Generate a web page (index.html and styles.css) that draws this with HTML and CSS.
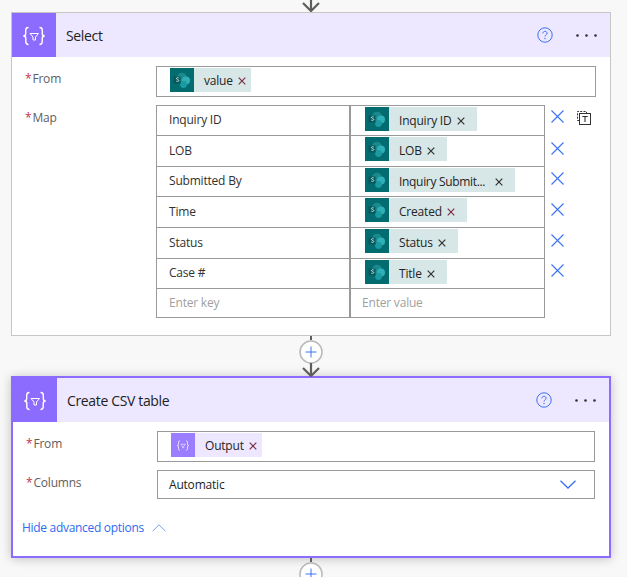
FILE: index.html
```html
<!DOCTYPE html>
<html lang="en">
<head>
<meta charset="utf-8">
<title>Flow</title>
<link rel="stylesheet" href="styles.css">
</head>
<body>
<svg class="defs" width="0" height="0" aria-hidden="true">
  <symbol id="data-op" viewBox="0 0 44 44">
    <path d="M16.500 14.500c-2.500 0-2.800 1-2.800 2.700v3.300c0 1.500-.7 2.500-2.400 2.500 1.700 0 2.500 1 2.500 2.500v3.300c0 1.700.2 2.700 2.700 2.700M27.500 14.500c2.500 0 2.800 1 2.800 2.700v3.300c0 1.500.7 2.500 2.400 2.500-1.700 0-2.500 1-2.500 2.500v3.300c0 1.700-.2 2.700-2.700 2.700" fill="none" stroke="#fff" stroke-width="1.400"/>
    <path d="M18 20.500h8.500l-3 3.500v3h-2.500v-3z" fill="none" stroke="#fff" stroke-width="1"/>
  </symbol>
  <symbol id="sharepoint" viewBox="0 0 24 24">
    <rect width="24" height="24" fill="#036c70"/>
    <circle cx="12" cy="9.500" r="4.800" fill="#1a8a8e"/>
    <circle cx="16" cy="12.500" r="4" fill="#2fb0b6"/>
    <circle cx="13.500" cy="16.500" r="3.400" fill="#1a9ba1"/>
    <rect x="3.500" y="8.500" width="7" height="7" fill="#04585c"/>
    <path d="M8.800 10c-.9-.5-2.500-.4-2.400.6.100 1 2.400.8 2.400 1.900 0 1-1.600 1.100-2.500.6" fill="none" stroke="#e8f4f4" stroke-width=".8"/>
  </symbol>
  <symbol id="close-small" viewBox="0 0 8 8">
    <path d="M.7.700l6.600 6.600M7.300.700L.7 7.300" fill="none" stroke="currentColor" stroke-width="1.200"/>
  </symbol>
  <symbol id="close-big" viewBox="0 0 13 13">
    <path d="M.5.500l12 12M12.500.500l-12 12" fill="none" stroke="#3a72f5" stroke-width="1.100"/>
  </symbol>
  <symbol id="arrow" viewBox="0 0 20 14">
    <path d="M10 0v12M2 5l8 8 8-8" fill="none" stroke="#5f5e5c" stroke-width="2.200"/>
  </symbol>
  <symbol id="help" viewBox="0 0 16 16">
    <circle cx="8" cy="8" r="7.200" fill="none" stroke="#3a72f5" stroke-width="1"/>
    <path d="M5.900 6.300c0-1.300 1-2 2.100-2s2.100.7 2.100 1.900c0 1.500-2.100 1.600-2.100 3.300" fill="none" stroke="#3a72f5" stroke-width="1"/>
    <circle cx="8" cy="11.500" r=".7" fill="#3a72f5"/>
  </symbol>
  <symbol id="more" viewBox="0 0 21 3">
    <circle cx="1.500" cy="1.500" r="1.300" fill="#323130"/>
    <circle cx="10.500" cy="1.500" r="1.300" fill="#323130"/>
    <circle cx="19.500" cy="1.500" r="1.300" fill="#323130"/>
  </symbol>
  <symbol id="plus" viewBox="0 0 24 24">
    <circle cx="12" cy="12" r="11" fill="#fff" stroke="#b9b8b7" stroke-width="1.500"/>
    <path d="M12 6.500v11M6.500 12h11" fill="none" stroke="#3a72f5" stroke-width="1"/>
  </symbol>
</svg>

<main class="canvas">
  <div class="connector connector-top">
    <svg class="arrow" width="20" height="14"><use href="#arrow"/></svg>
  </div>

  <section class="card">
    <header class="card-head">
      <div class="card-icon"><svg width="44" height="44"><use href="#data-op"/></svg></div>
      <h2 class="card-title">Select</h2>
      <svg class="help" width="16" height="16"><use href="#help"/></svg>
      <svg class="more" width="21" height="3"><use href="#more"/></svg>
    </header>
    <div class="card-body">
      <div class="field">
        <label class="field-label"><span class="req">*</span>From</label>
        <div class="input">
          <span class="chip chip-flat"><svg class="chip-icon" width="24" height="24"><use href="#sharepoint"/></svg><span class="chip-text">value</span><svg class="chip-x chip-x-red" width="8" height="8"><use href="#close-small"/></svg></span>
        </div>
      </div>
      <div class="field field-map">
        <label class="field-label"><span class="req">*</span>Map</label>
        <div class="map-table">
          <div class="cell cell-key">Inquiry ID</div>
          <div class="cell cell-value"><span class="chip"><svg class="chip-icon" width="24" height="24"><use href="#sharepoint"/></svg><span class="chip-text">Inquiry ID</span><svg class="chip-x" width="8" height="8"><use href="#close-small"/></svg></span></div>
          <div class="cell cell-key">LOB</div>
          <div class="cell cell-value"><span class="chip"><svg class="chip-icon" width="24" height="24"><use href="#sharepoint"/></svg><span class="chip-text">LOB</span><svg class="chip-x" width="8" height="8"><use href="#close-small"/></svg></span></div>
          <div class="cell cell-key">Submitted By</div>
          <div class="cell cell-value"><span class="chip"><svg class="chip-icon" width="24" height="24"><use href="#sharepoint"/></svg><span class="chip-text chip-text-long">Inquiry Submit...</span><svg class="chip-x" width="8" height="8"><use href="#close-small"/></svg></span></div>
          <div class="cell cell-key">Time</div>
          <div class="cell cell-value"><span class="chip"><svg class="chip-icon" width="24" height="24"><use href="#sharepoint"/></svg><span class="chip-text">Created</span><svg class="chip-x chip-x-red" width="8" height="8"><use href="#close-small"/></svg></span></div>
          <div class="cell cell-key">Status</div>
          <div class="cell cell-value"><span class="chip"><svg class="chip-icon" width="24" height="24"><use href="#sharepoint"/></svg><span class="chip-text">Status</span><svg class="chip-x" width="8" height="8"><use href="#close-small"/></svg></span></div>
          <div class="cell cell-key">Case #</div>
          <div class="cell cell-value"><span class="chip"><svg class="chip-icon" width="24" height="24"><use href="#sharepoint"/></svg><span class="chip-text">Title</span><svg class="chip-x" width="8" height="8"><use href="#close-small"/></svg></span></div>
          <div class="cell cell-key cell-ph">Enter key</div>
          <div class="cell cell-value cell-ph">Enter value</div>
        </div>
        <div class="map-actions">
          <svg class="row-x" width="13" height="13"><use href="#close-big"/></svg>
          <svg class="row-x" width="13" height="13"><use href="#close-big"/></svg>
          <svg class="row-x" width="13" height="13"><use href="#close-big"/></svg>
          <svg class="row-x" width="13" height="13"><use href="#close-big"/></svg>
          <svg class="row-x" width="13" height="13"><use href="#close-big"/></svg>
          <svg class="row-x" width="13" height="13"><use href="#close-big"/></svg>
        </div>
        <svg class="text-mode" width="15" height="15" viewBox="0 0 15 15">
          <path d="M3 10.500H1.500v-9h9V3" fill="none" stroke="#323130" stroke-width="1" stroke-dasharray="2 1.300"/>
          <rect x="3.500" y="3.500" width="11" height="11" fill="#fff" stroke="#323130" stroke-width="1"/>
          <path d="M6.300 6.500h5.400M9 6.500v5.500" fill="none" stroke="#323130" stroke-width="1.100"/>
        </svg>
      </div>
    </div>
  </section>

  <div class="connector connector-mid">
    <svg class="plus" width="24" height="24"><use href="#plus"/></svg>
    <svg class="arrow" width="20" height="14"><use href="#arrow"/></svg>
  </div>

  <section class="card card-selected">
    <header class="card-head">
      <div class="card-icon"><svg width="44" height="44"><use href="#data-op"/></svg></div>
      <h2 class="card-title">Create CSV table</h2>
      <svg class="help" width="16" height="16"><use href="#help"/></svg>
      <svg class="more" width="21" height="3"><use href="#more"/></svg>
    </header>
    <div class="card-body">
      <div class="field">
        <label class="field-label"><span class="req">*</span>From</label>
        <div class="input">
          <span class="chip chip-flat chip-purple"><svg class="chip-icon chip-icon-op" width="24" height="24"><use href="#data-op"/></svg><span class="chip-text">Output</span><svg class="chip-x chip-x-red" width="8" height="8"><use href="#close-small"/></svg></span>
        </div>
      </div>
      <div class="field">
        <label class="field-label"><span class="req">*</span>Columns</label>
        <div class="input input-select">
          <span class="select-value">Automatic</span>
          <svg class="select-caret" width="16" height="9" viewBox="0 0 16 9"><path d="M.5.700L8 8l7.500-7.300" fill="none" stroke="#3a72f5" stroke-width="1.300"/></svg>
        </div>
      </div>
      <a class="advanced">Hide advanced options<svg class="advanced-caret" width="14" height="8" viewBox="0 0 14 8"><path d="M.5 7.300L7 .8l6.500 6.500" fill="none" stroke="#7a9df5" stroke-width="1"/></svg></a>
    </div>
  </section>

  <div class="connector connector-bottom">
    <svg class="plus" width="24" height="24"><use href="#plus"/></svg>
  </div>
</main>
</body>
</html>
```

FILE: styles.css
```css
* { box-sizing: border-box; }
html, body { margin: 0; height: 100%; overflow: hidden; }
body {
  background: #f8f8f8;
  font-family: "Open Sans", "Noto Sans", sans-serif;
  font-size: 12px;
  letter-spacing: -0.2px;
  color: #323130;
}
.defs { position: absolute; }
.canvas { width: 627px; padding-left: 11px; }

.connector { width: 600px; display: flex; flex-direction: column; align-items: center; }
.connector-top { height: 12px; justify-content: flex-end; }
.connector-top .arrow { flex: none; }
.connector-mid { height: 40px; }
.connector-mid::before,
.connector-bottom::before { content: ""; width: 2px; flex: none; background: #5f5e5c; }
.connector-mid::before { height: 4px; }
.connector-bottom { height: 19px; }
.connector-bottom::before { height: 4px; }
.plus { flex: none; }
.connector-mid .arrow { flex: none; margin-top: -1px; }

.card {
  width: 600px;
  height: 324px;
  background: #fff;
  border: 1px solid #c8c6c4;
}
.card-selected {
  height: 182px;
  border: 2px solid #8c6cff;
  box-shadow: 0 1px 10px rgba(0, 0, 0, .22);
}
.card-head {
  height: 44px;
  display: flex;
  align-items: center;
  background: #ede7ff;
}
.card-icon { width: 44px; height: 44px; background: #8c6cff; }
.card-icon svg { display: block; }
.card-title {
  flex: 1;
  margin: 0 0 0 10px;
  font-size: 14px;
  font-weight: 400;
  letter-spacing: -0.35px;
  color: #201f1e;
}
.help { margin-right: 23px; }
.more { margin-right: 13px; }

.card-body { padding: 9px 14px 0 12px; position: relative; }
.field { display: flex; align-items: flex-start; margin-bottom: 8px; }
.field-label { width: 132px; padding-top: 4px; color: #605e5c; flex: none; }
.req { color: #c4314b; margin: 0 1px 0 1px; }

.input {
  width: 440px;
  height: 31px;
  border: 1px solid #999;
  padding: 1px 13px;
  background: #fff;
}
.card-selected .input { width: 438px; }
.card-selected .input-select {
  height: 29px;
  display: flex;
  align-items: center;
  justify-content: space-between;
  padding: 0 18px 0 11px;
  color: #201f1e;
}

.chip {
  display: inline-flex;
  align-items: center;
  height: 24px;
  background: #d7e7e7;
  color: #252423;
  padding-right: 7px;
  vertical-align: top;
}
.chip-flat { padding-right: 0; }
.chip-purple { background: #ede7ff; }
.chip-icon { flex: none; margin-right: 10px; }
.chip-icon-op { background: #8c6cff; opacity: .85; }
.chip-text { white-space: nowrap; }
.chip-text-long { margin-right: 5px; letter-spacing: -0.32px; }
.chip-x { flex: none; margin: 2px 5px 0 5px; color: #323130; }
.chip-x-red { color: #7a2f45; }
.cell-value .chip-text { padding-top: 2px; }
.cell-value .chip-x { margin-top: 4px; }

.field-map { position: relative; }
.map-table {
  width: 389px;
  flex: none;
  display: grid;
  grid-template-columns: 194px 193px;
  grid-template-rows: 30px 31px 30px 31px 31px 30px 28px;
  border: 1px solid #999;
}
.cell { border-bottom: 1px solid #999; padding: 1px 0 0 13px; }
.cell:nth-last-child(-n+2) { border-bottom: 0; }
.cell-key {
  border-right: 2px solid #999;
  display: flex;
  align-items: center;
  color: #323130;
  padding: 0 0 2px 12px;
}
.cell-value { padding-left: 14px; }
.cell-ph { color: #a19f9d; display: flex; align-items: center; padding-top: 0; padding-bottom: 1px; }
.cell-value.cell-ph { padding-left: 11px; }

.map-actions {
  display: grid;
  grid-template-rows: 32px 30px 31px 31px 30px 30px;
  margin: 5px 0 0 6px;
  flex: none;
}
.row-x { display: block; }
.text-mode { margin: 5px 0 0 12px; flex: none; }

.advanced {
  display: flex;
  align-items: center;
  margin-top: 20px;
  margin-left: -3px;
  letter-spacing: -0.3px;
  color: #2f6af0;
}
.advanced-caret { margin-left: 8px; }
```
